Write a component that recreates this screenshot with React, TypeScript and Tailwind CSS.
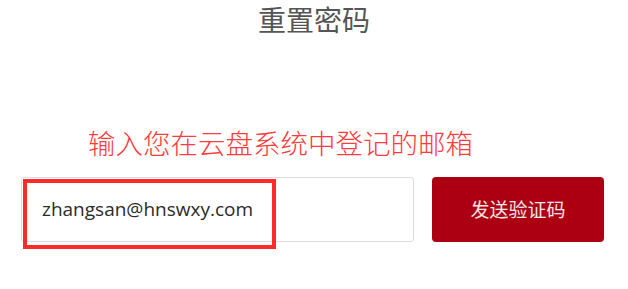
import React from "react";

export default function App() {
  return (
    <div className="w-[628px] h-[289px] bg-white overflow-hidden font-['Noto_Sans_CJK_SC',sans-serif]">
      <h1 className="pt-[5px] text-center text-[28px] leading-[28px] text-[#555555] font-normal">
        重置密码
      </h1>
      <p className="mt-[95px] pl-[88px] text-[27.5px] leading-[28px] text-[#ff3b3b] font-light tracking-[0px]">
        输入您在云盘系统中登记的邮箱
      </p>
      <div className="mt-[21px] flex pl-[21px] gap-[18px]">
        <div className="relative w-[393px] h-[65px] border border-[#d9dde2] rounded-[3px] bg-white flex items-center">
          <span className="pl-[20px] text-[19px] text-[#2b2b2b] font-['Open_Sans',sans-serif]">
            zhangsan@hnswxy.com
          </span>
          <div className="absolute left-[1px] top-[1px] w-[253px] h-[70px] border-[4px] border-[#ff2b2b]" />
        </div>
        <button className="w-[172px] h-[65px] rounded-[4px] bg-[#ac0012] text-[19px] text-[#f8e6e8] flex items-center justify-center">
          发送验证码
        </button>
      </div>
    </div>
  );
}
